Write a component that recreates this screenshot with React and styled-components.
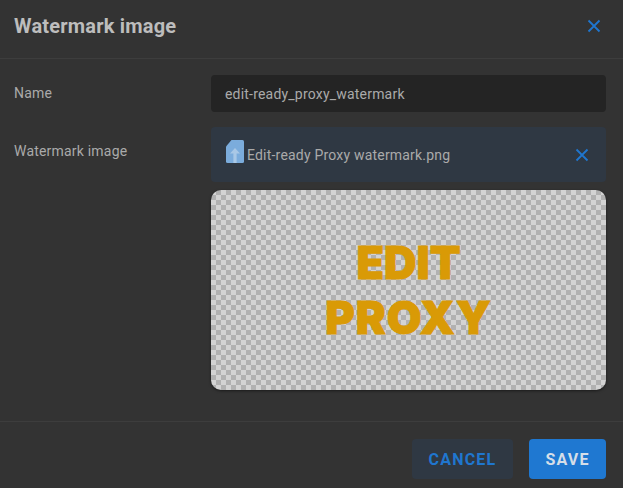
import React from 'react';
import styled, { createGlobalStyle } from 'styled-components';

const GlobalStyle = createGlobalStyle`
  html, body {
    margin: 0;
    background: #333333;
  }
  * {
    box-sizing: border-box;
  }
`;

const Dialog = styled.div`
  width: 623px;
  height: 488px;
  display: flex;
  flex-direction: column;
  background: #333333;
  font-family: Roboto, sans-serif;
  color: #aaaaaa;
  overflow: hidden;
`;

const Header = styled.header`
  height: 59px;
  flex: none;
  display: flex;
  align-items: center;
  justify-content: space-between;
  padding: 0 22px 6px 14px;
  border-bottom: 1px solid #3d3d3d;
`;

const Title = styled.h2`
  margin: 0;
  font-size: 20px;
  font-weight: 700;
  letter-spacing: 0.2px;
  color: #bdbdbd;
`;

const IconButton = styled.button`
  display: flex;
  padding: 0;
  border: 0;
  background: none;
  color: #1f76cf;
`;

const Body = styled.div`
  flex: 1;
  display: flex;
  flex-direction: column;
  gap: 15px;
  padding: 16px 17px 0 14px;
`;

const Row = styled.div`
  display: grid;
  grid-template-columns: 197px 395px;
`;

const Label = styled.label`
  font-size: 14px;
  letter-spacing: 0.2px;
  line-height: 16px;
  padding-top: ${(p) => p.$top}px;
`;

const NameInput = styled.div`
  height: 37px;
  display: flex;
  align-items: center;
  padding: 0 14px;
  border-radius: 4px;
  background: #242424;
  font-size: 14px;
  letter-spacing: 0.2px;
`;

const Column = styled.div`
  display: flex;
  flex-direction: column;
  gap: 8px;
`;

const FileBar = styled.div`
  height: 55px;
  display: flex;
  align-items: center;
  gap: 3px;
  padding: 0 17px 0 15px;
  border-radius: 4px;
  background: #2f3843;
  font-size: 14px;
  letter-spacing: 0.2px;
`;

const FileName = styled.span`
  flex: 1;
`;

const Preview = styled.div`
  height: 200px;
  display: flex;
  flex-direction: column;
  align-items: center;
  justify-content: center;
  border-radius: 10px;
  background-color: #d3d3d3;
  background-image: conic-gradient(#b1b1b1 25%, transparent 0 50%, #b1b1b1 0 75%, transparent 0);
  background-size: 10px 10px;
  box-shadow: 0 1px 3px rgba(0, 0, 0, 0.5);
`;

const WatermarkLine = styled.div`
  font-family: Inter, sans-serif;
  font-size: 45px;
  font-weight: 900;
  letter-spacing: ${(p) => p.$spacing}px;
  line-height: 55px;
  color: #d99a06;
  -webkit-text-stroke: 1px #d99a06;
`;

const Footer = styled.footer`
  height: 67px;
  flex: none;
  display: flex;
  justify-content: flex-end;
  gap: 16px;
  padding: 17px 17px 0 0;
  border-top: 1px solid #3d3d3d;
`;

const Button = styled.button`
  height: 40px;
  width: ${(p) => p.$width}px;
  border: 0;
  border-radius: 4px;
  padding: 0;
  font-family: Roboto, sans-serif;
  font-size: 16px;
  font-weight: 700;
  letter-spacing: 1.2px;
  color: ${(p) => (p.$primary ? '#d5dee8' : '#1f76cf')};
  background: ${(p) => (p.$primary ? '#1f78d1' : '#2f3843')};
`;

const CloseIcon = ({ size }) => (
  <svg width={size} height={size} viewBox="0 0 14 14" fill="none" stroke="currentColor" strokeWidth="1.8">
    <path d="M1.500 1.500l11 11M12.500 1.500l-11 11" />
  </svg>
);

const FileIcon = () => (
  <svg width="18" height="23" viewBox="0 0 18 23" style={{ marginBottom: 6 }}>
    <path d="M5.500 0h11A1.500 1.500 0 0 1 18 1.500v20a1.500 1.500 0 0 1-1.500 1.500h-15A1.500 1.500 0 0 1 0 21.500V6.500z" fill="#7bacdc" />
    <path d="M9 8l5 5.500h-3.400V23H7.400v-9.500H4z" fill="#a9c8e6" />
  </svg>
);

export default function App() {
  return (
    <Dialog>
      <GlobalStyle />
      <Header>
        <Title>Watermark image</Title>
        <IconButton><CloseIcon size={14} /></IconButton>
      </Header>
      <Body>
        <Row>
          <Label $top={10}>Name</Label>
          <NameInput>edit-ready_proxy_watermark</NameInput>
        </Row>
        <Row>
          <Label $top={16}>Watermark image</Label>
          <Column>
            <FileBar>
              <FileIcon />
              <FileName>Edit-ready Proxy watermark.png</FileName>
              <IconButton><CloseIcon size={14} /></IconButton>
            </FileBar>
            <Preview>
              <WatermarkLine $spacing={0}>EDIT</WatermarkLine>
              <WatermarkLine $spacing={1}>PROXY</WatermarkLine>
            </Preview>
          </Column>
        </Row>
      </Body>
      <Footer>
        <Button $width={101}>CANCEL</Button>
        <Button $width={77} $primary>SAVE</Button>
      </Footer>
    </Dialog>
  );
}
